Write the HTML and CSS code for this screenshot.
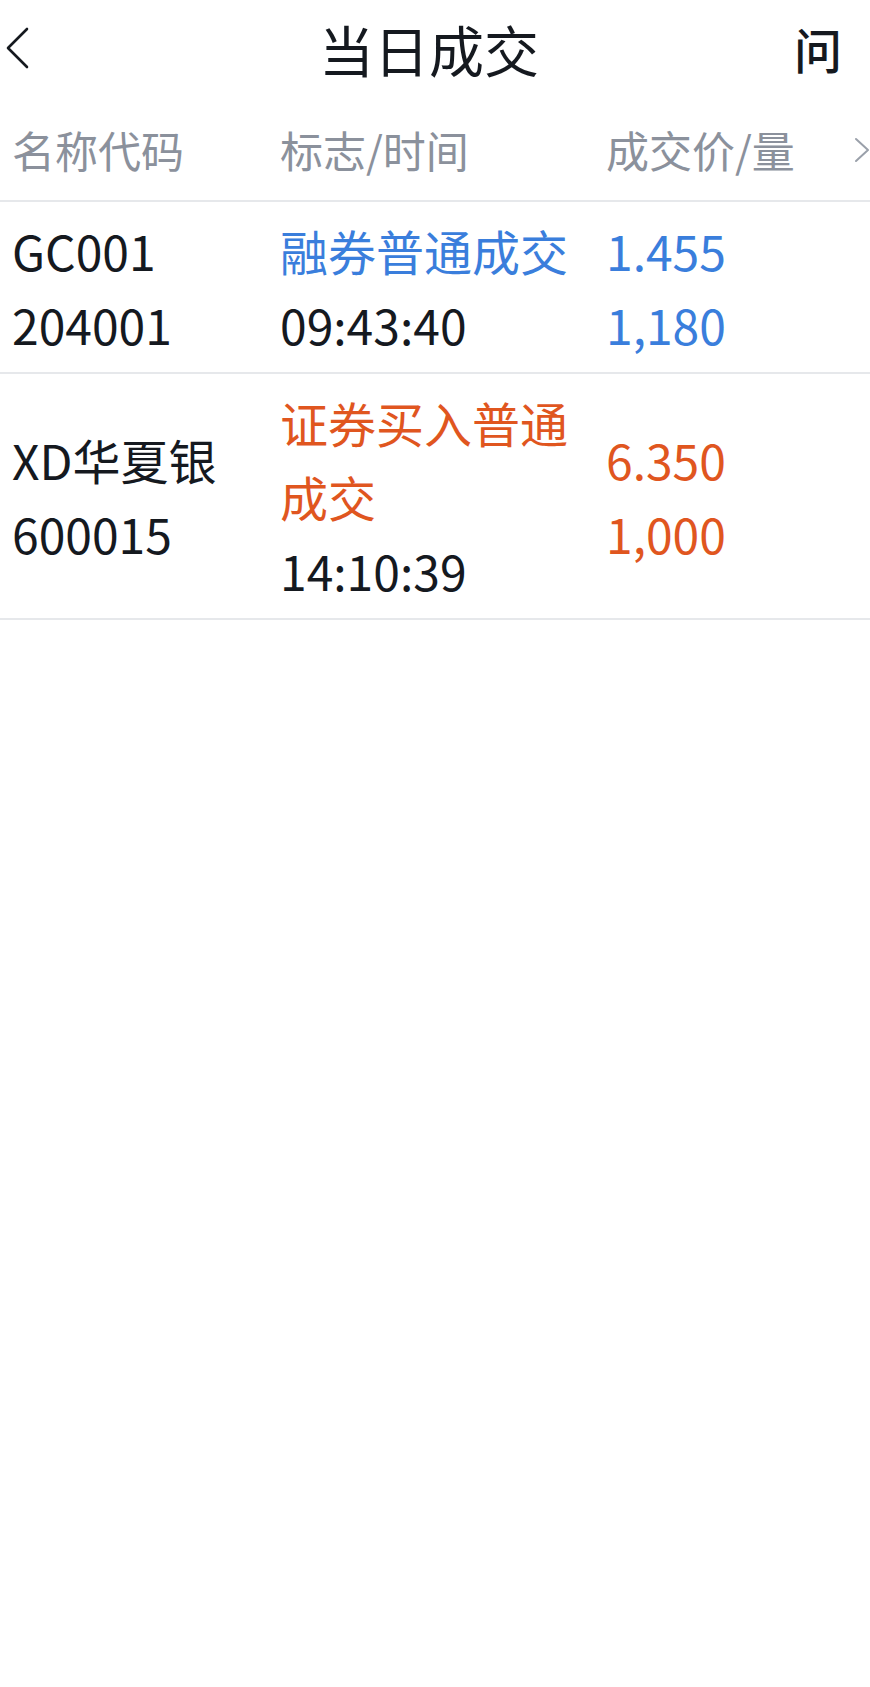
FILE: index.html
```html
<!DOCTYPE html>
<html lang="zh-CN">
<head>
    <meta charset="UTF-8" />
    <meta name="viewport" content="width=device-width, initial-scale=1" />
    <title>当日成交</title>
    <link rel="stylesheet" href="styles.css">
</head>
<body>
    <div class="nav">
        <a class="back" href="#">
            <svg width="24" height="42" viewBox="0 0 24 42"><polyline points="21,2 2,21 21,40" fill="none" stroke="#15191f" stroke-width="2.6" stroke-linecap="round" stroke-linejoin="round"/></svg>
        </a>
        <div class="title">当日成交</div>
        <a class="ask" href="#">问</a>
    </div>

    <div class="thead">
        <div>名称代码</div>
        <div>标志/时间</div>
        <div>成交价/量</div>
        <svg class="more" width="16" height="26" viewBox="0 0 16 26"><polyline points="2,2 14,13 2,24" fill="none" stroke="#9aa0aa" stroke-width="2" stroke-linecap="round" stroke-linejoin="round"/></svg>
    </div>

    <div class="row">
        <div class="cell">
            <div>GC001</div>
            <div>204001</div>
        </div>
        <div class="cell">
            <div class="blue">融券普通成交</div>
            <div>09:43:40</div>
        </div>
        <div class="cell blue">
            <div>1.455</div>
            <div>1,180</div>
        </div>
    </div>

    <div class="row">
        <div class="cell">
            <div>XD华夏银</div>
            <div>600015</div>
        </div>
        <div class="cell">
            <div class="orange">证券买入普通成交</div>
            <div>14:10:39</div>
        </div>
        <div class="cell orange">
            <div>6.350</div>
            <div>1,000</div>
        </div>
    </div>
</body>
</html>
```

FILE: styles.css
```css
body {
    margin: 0;
    background: #fff;
    color: #15191f;
    font-family: "Noto Sans CJK SC", "Noto Sans", sans-serif;
}

a {
    color: inherit;
    text-decoration: none;
}

/* top bar */
.nav {
    height: 100px;
    display: grid;
    grid-template-columns: 1fr auto 1fr;
    align-items: center;
    padding: 0 28px 0 6px;
}

.back {
    display: flex;
    align-items: center;
    justify-self: start;
    margin-top: -4px;
}

.title {
    font-size: 55px;
    line-height: 1;
    margin-left: 10px;
    margin-top: -4px;
}

.ask {
    justify-self: end;
    font-size: 48px;
    font-weight: 500;
    line-height: 1;
    margin-top: -4px;
}

/* column header */
.thead {
    height: 100px;
    display: grid;
    grid-template-columns: 268px 326px 1fr 16px;
    align-items: center;
    padding-left: 12px;
    font-size: 43px;
    color: #8b919c;
    border-bottom: 2px solid #e6e8eb;
}

.thead div {
    margin-top: -2px;
}

.more {
    display: block;
}

/* rows */
.row {
    display: grid;
    grid-template-columns: 268px 326px 1fr;
    align-items: center;
    padding: 11px 0 11px 12px;
    font-size: 48px;
    line-height: 74px;
    border-bottom: 2px solid #e6e8eb;
}

.blue {
    color: #3a7edc;
}

.orange {
    color: #e0561f;
}
```
